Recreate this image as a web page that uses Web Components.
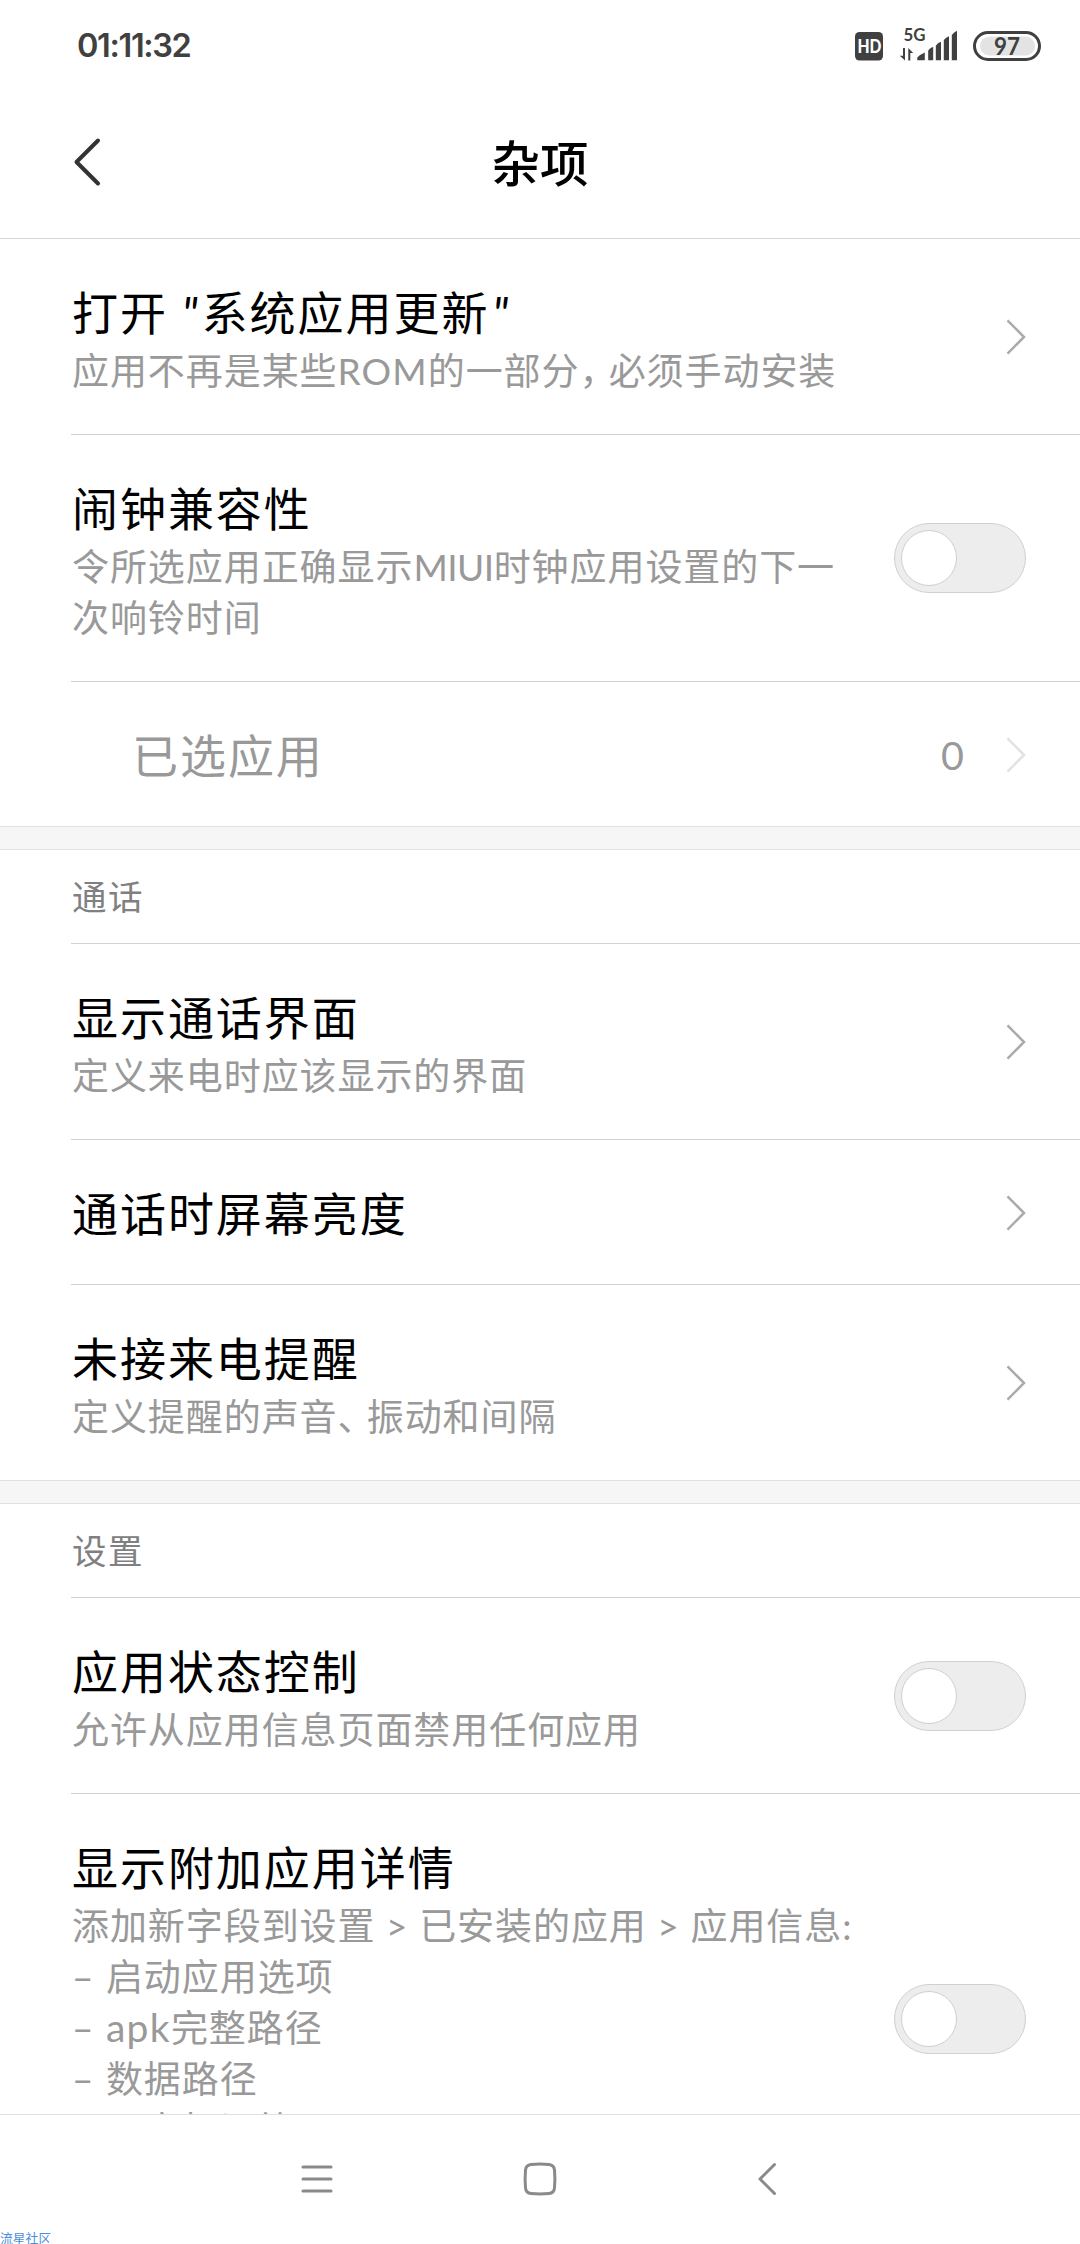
<!DOCTYPE html>
<html lang="zh-CN">
<head>
<meta charset="utf-8">
<title>杂项</title>
<style>
html,body{margin:0;background:#fff}
body{width:1080px;height:2244px;overflow:hidden;font-family:Lato,"Noto Sans CJK SC",sans-serif;color:#000}
</style>
</head>
<body>
<settings-screen></settings-screen>
<script>
const define = (name, html, setup) => customElements.define(name, class extends HTMLElement {
  constructor() {
    super();
    this.attachShadow({ mode: 'open' }).innerHTML = html;
  }
  connectedCallback() { if (setup) setup(this, this.shadowRoot); }
});

define('status-bar', `
<style>
:host{display:flex;align-items:center;justify-content:space-between;height:91px;box-sizing:border-box;padding:0 39px 0 77px;color:#404040}
.clock{font:600 32.5px/40px Inter,sans-serif;letter-spacing:-1.35px}
.right{display:flex;align-items:center}
svg{display:block}
text{font-family:Lato,sans-serif;font-weight:700}
</style>
<span class="clock">01:11:32</span>
<div class="right">
<svg width="186" height="50" viewBox="855 20 186 50" fill="#404040">
<rect x="855" y="31" width="28" height="28.5" rx="4.5"/>
<text x="857.4" y="52.3" font-size="19" textLength="24" lengthAdjust="spacingAndGlyphs" fill="#fff" style="font-weight:900">HD</text>
<text x="903.5" y="40.3" font-size="16.5" textLength="22" lengthAdjust="spacingAndGlyphs">5G</text>
<path d="M903 47H905V59.5L899.8 54.7H903zM908.3 59.5V47L913.2 52H910.3V59.5z"/>
<path d="M917.3 59.3V56.5Q921 53 924.8 51.5V59.3zM928.2 59.3V49.5Q930 47 933.2 45.8V59.3zM935.8 59.3V44.8Q937.5 42 941 40.8V59.3zM943.8 59.3V39Q946 36.5 949 35.3V59.3zM951.8 59.3V34Q954 31 957 29.8V59.3z"/>
<rect x="974.5" y="31.5" width="65" height="27" rx="13.5" fill="#fff" stroke="#404040" stroke-width="3"/>
<rect x="980" y="35.5" width="55" height="19" rx="9.5" fill="#e3e3e3"/>
<text x="994" y="54" font-size="24.5" textLength="26" lengthAdjust="spacingAndGlyphs">97</text>
</svg>
</div>`);

define('title-bar', `
<style>
:host{display:grid;grid-template-columns:1fr auto 1fr;align-items:center;height:148px;box-sizing:border-box;padding:0 71px 6px;border-bottom:1px solid #d4d4d4}
h1{margin:0 0 2px;font:500 48.5px/72px "Noto Sans CJK SC",sans-serif}
svg{display:block}
</style>
<svg width="32" height="52" viewBox="0 0 32 52" fill="none" stroke="#333" stroke-width="4" stroke-linecap="round" stroke-linejoin="round"><path d="M27 4.5L5.5 26L27 47.5"/></svg>
<h1><slot></slot></h1>`);

define('chevron-right', `
<style>:host{display:block;color:#ababab}:host([faint]){color:#e2e2e2}svg{display:block}</style>
<svg width="20" height="36" viewBox="0 0 20 36" fill="none" stroke="currentColor" stroke-width="2.5"><path d="M1.5 1.3L18 18L1.5 34.7"/></svg>`);

define('toggle-switch', `
<style>
:host{display:flex;align-items:center;box-sizing:border-box;width:132px;height:70px;margin-bottom:1px;padding:0 6px;border-radius:35px;background:#ededed;border:1px solid #d0d0d0}
i{box-sizing:border-box;width:56px;height:56px;border-radius:50%;background:#fff;border:1px solid #cfcfcf}
</style><i></i>`);

define('setting-row', `
<style>
:host{display:block;padding-left:71px}
.in{display:flex;align-items:center;justify-content:space-between;box-sizing:border-box;padding:40px 54px 39px 1px;border-bottom:1px solid #d2d2d2}
:host([last]) .in{border-bottom:0}
.text{margin:1px 0 -1px}
.title{font-size:46px;line-height:65px;letter-spacing:1.95px;white-space:nowrap}
.sum{color:#999;font-size:37px;line-height:51px;letter-spacing:.93px;white-space:nowrap}
.end{display:flex;align-items:center;gap:42px;color:#999;font-size:39.5px;line-height:51px}
:host([disabled]) .title{color:#999;padding-left:60px}
</style>
<div class="in"><div class="text"><div class="title"><slot name="title"></slot></div><div class="sum"><slot name="summary"></slot></div></div><div class="end"><slot></slot></div></div>`,
(host, root) => { if (!host.querySelector('[slot=summary]')) root.querySelector('.sum').remove(); });

define('section-gap', `<style>:host{display:block;box-sizing:border-box;height:24px;background:#f6f6f6;border:solid #e1e1e1;border-width:1px 0}</style>`);

define('section-label', `
<style>:host{display:block;padding-left:71px}
div{height:93px;line-height:93px;padding-left:1px;font-size:34.5px;letter-spacing:1.5px;color:#808080;border-bottom:1px solid #d2d2d2}</style>
<div><slot></slot></div>`);

define('nav-bar', `
<style>
:host{display:flex;align-items:center;justify-content:center;box-sizing:border-box;height:130px;padding-bottom:2px;border-top:1px solid #e0e0e0;background:#fff;position:relative}
svg{display:block;fill:none;stroke:#8a8a8a;stroke-width:3;stroke-linecap:round;stroke-linejoin:round}
.menu{margin:0 187px 0 9px}.back{margin-left:196px}
.mark{position:absolute;left:0;bottom:-4px;font-size:12.8px;line-height:19px;color:#4d8fd6}
</style>
<svg class="menu" width="36" height="36"><path d="M4 6H32M4 18H32M4 30H32"/></svg>
<svg width="36" height="36"><path d="M9 3.5Q18 2.7 27 3.5Q32 4 32.5 9Q33.3 18 32.5 27Q32 32 27 32.5Q18 33.3 9 32.5Q4 32 3.5 27Q2.7 18 3.5 9Q4 4 9 3.5z"/></svg>
<svg class="back" width="36" height="36"><path d="M20.5 3.5L6 18L20.5 32.5"/></svg>
<span class="mark">流星社区</span>`);

define('settings-screen', `
<style>
:host{display:flex;flex-direction:column;height:2244px;background:#fff}
main{flex:1;min-height:0;overflow:hidden}
.p{letter-spacing:-7.8px}
.q{letter-spacing:4px}.q2{margin-left:3px}
.rom{letter-spacing:1.1px}.miui{letter-spacing:-.5px}.sp{letter-spacing:1.1px}.d{letter-spacing:1.5px}
.apk{font-size:39px;line-height:1;letter-spacing:1.3px}
</style>
<status-bar></status-bar>
<title-bar>杂项</title-bar>
<main>
<setting-row><span slot="title">打开 <i class="q">"</i>系统应用更新<i class="q2">"</i></span><span slot="summary">应用不再是某些<span class="rom">ROM</span>的一部分<span class="p">，</span>必须手动安装</span><chevron-right></chevron-right></setting-row>
<setting-row><span slot="title">闹钟兼容性</span><span slot="summary">令所选应用正确显示<span class="miui">MIUI</span>时钟应用设置的下一<br>次响铃时间</span><toggle-switch></toggle-switch></setting-row>
<setting-row disabled last><span slot="title">已选应用</span><span>0</span><chevron-right faint></chevron-right></setting-row>
<section-gap></section-gap>
<section-label>通话</section-label>
<setting-row><span slot="title">显示通话界面</span><span slot="summary">定义来电时应该显示的界面</span><chevron-right></chevron-right></setting-row>
<setting-row><span slot="title">通话时屏幕亮度</span><chevron-right></chevron-right></setting-row>
<setting-row last><span slot="title">未接来电提醒</span><span slot="summary">定义提醒的声音<span class="p">、</span>振动和间隔</span><chevron-right></chevron-right></setting-row>
<section-gap></section-gap>
<section-label>设置</section-label>
<setting-row><span slot="title">应用状态控制</span><span slot="summary">允许从应用信息页面禁用任何应用</span><toggle-switch></toggle-switch></setting-row>
<setting-row><span slot="title">显示附加应用详情</span><span slot="summary">添加新字段到设置<span class="sp"> &gt; </span>已安装的应用<span class="sp"> &gt; </span>应用信息:<br><span class="d">– </span>启动应用选项<br><span class="d">– </span><span class="apk">apk</span>完整路径<br><span class="d">– </span>数据路径<br><span class="d">– </span>用户标识符<br><br></span><toggle-switch></toggle-switch></setting-row>
</main>
<nav-bar></nav-bar>`);
</script>
</body>
</html>
